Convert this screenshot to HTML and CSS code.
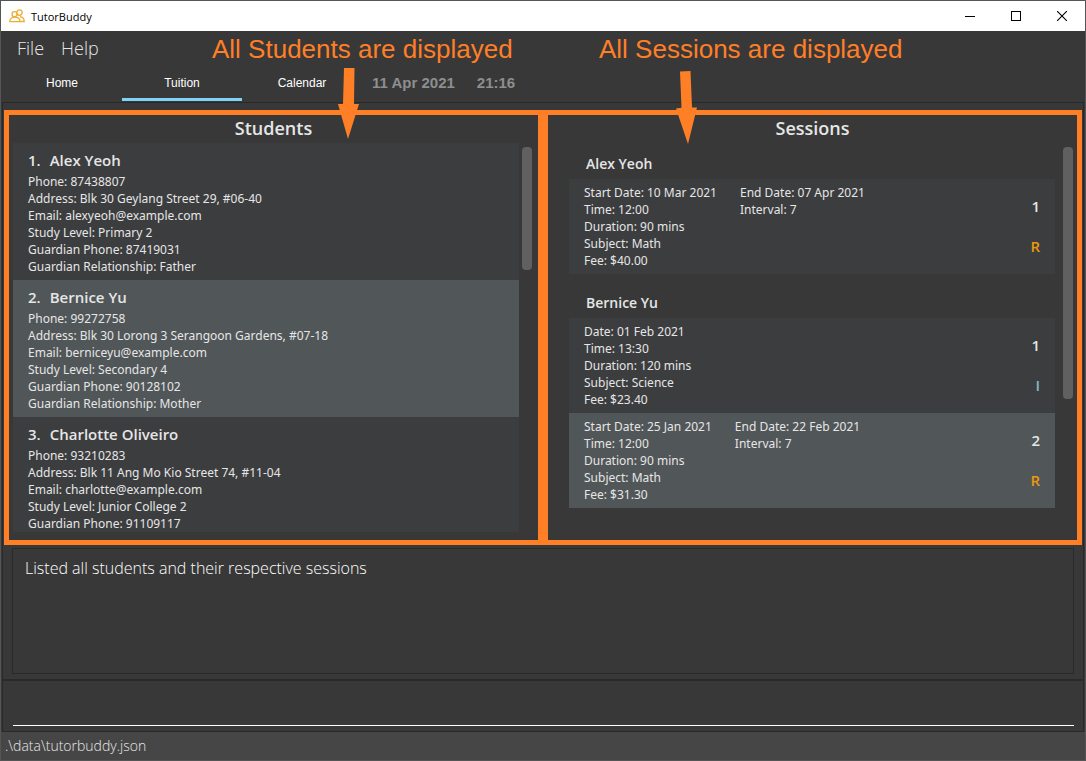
FILE: index.html
```html
<!DOCTYPE html>
<html lang="en">
<head>
<meta charset="utf-8">
<title>TutorBuddy</title>
<link rel="stylesheet" href="styles.css">
</head>
<body>
<div class="window">
  <header class="titlebar">
    <svg class="logo" width="16" height="14" viewBox="0 0 16 14" fill="none" stroke="#eeac32" stroke-width="1.3">
      <circle cx="10.5" cy="3.6" r="2.7"/>
      <path d="M11 7.600c2.600.3 4.200 1.900 4.200 4.900h-4"/>
      <circle cx="5.500" cy="5.200" r="2.500" fill="#fff"/>
      <path d="M.8 12.600c0-2.600 1.700-4.400 4.900-4.400s5.300 1.800 5.300 4.400z" fill="#fff"/>
    </svg>
    <span class="app-name">TutorBuddy</span>
    <button class="win-btn" aria-label="Minimize"><svg width="10" height="10" shape-rendering="crispEdges"><path d="M0 5.500h10" stroke="#000"/></svg></button>
    <button class="win-btn" aria-label="Maximize"><svg width="10" height="10" shape-rendering="crispEdges"><path d="M.5.5h9v9h-9z" fill="none" stroke="#000"/></svg></button>
    <button class="win-btn" aria-label="Close"><svg width="10" height="10"><path d="M0 0l10 10M10 0L0 10" stroke="#000" stroke-width="1.100"/></svg></button>
  </header>

  <nav class="menubar">
    <button class="menu">File</button>
    <button class="menu">Help</button>
  </nav>

  <nav class="tabs">
    <button class="tab">Home</button>
    <button class="tab active">Tuition</button>
    <button class="tab">Calendar</button>
    <span class="clock">11 Apr 2021</span>
    <span class="clock">21:16</span>
  </nav>

  <main class="panels">
    <section class="panel">
      <h2 class="panel-title">Students</h2>
      <div class="panel-body">
        <div class="students">
          <article class="student">
            <h3 class="name"><span>1.</span><span>Alex Yeoh</span></h3>
            <p>Phone: 87438807</p>
            <p>Address: Blk 30 Geylang Street 29, #06-40</p>
            <p>Email: alexyeoh@example.com</p>
            <p>Study Level: Primary 2</p>
            <p>Guardian Phone: 87419031</p>
            <p>Guardian Relationship: Father</p>
          </article>
          <article class="student alt">
            <h3 class="name"><span>2.</span><span>Bernice Yu</span></h3>
            <p>Phone: 99272758</p>
            <p>Address: Blk 30 Lorong 3 Serangoon Gardens, #07-18</p>
            <p>Email: berniceyu@example.com</p>
            <p>Study Level: Secondary 4</p>
            <p>Guardian Phone: 90128102</p>
            <p>Guardian Relationship: Mother</p>
          </article>
          <article class="student">
            <h3 class="name"><span>3.</span><span>Charlotte Oliveiro</span></h3>
            <p>Phone: 93210283</p>
            <p>Address: Blk 11 Ang Mo Kio Street 74, #11-04</p>
            <p>Email: charlotte@example.com</p>
            <p>Study Level: Junior College 2</p>
            <p>Guardian Phone: 91109117</p>
          </article>
        </div>
        <div class="scroll"><div class="thumb thumb-students"></div></div>
      </div>
    </section>

    <section class="panel">
      <h2 class="panel-title">Sessions</h2>
      <div class="panel-body panel-body-wide">
        <div class="sessions">
          <h3 class="group">Alex Yeoh</h3>
          <article class="session">
            <div>
              <p>Start Date: 10 Mar 2021</p>
              <p>Time: 12:00</p>
              <p>Duration: 90 mins</p>
              <p>Subject: Math</p>
              <p>Fee: $40.00</p>
            </div>
            <div>
              <p>End Date: 07 Apr 2021</p>
              <p>Interval: 7</p>
            </div>
            <div class="marks"><span>1</span><span class="recurring">R</span></div>
          </article>
          <h3 class="group">Bernice Yu</h3>
          <article class="session">
            <div>
              <p>Date: 01 Feb 2021</p>
              <p>Time: 13:30</p>
              <p>Duration: 120 mins</p>
              <p>Subject: Science</p>
              <p>Fee: $23.40</p>
            </div>
            <div class="marks"><span>1</span><span class="individual">I</span></div>
          </article>
          <article class="session alt">
            <div>
              <p>Start Date: 25 Jan 2021</p>
              <p>Time: 12:00</p>
              <p>Duration: 90 mins</p>
              <p>Subject: Math</p>
              <p>Fee: $31.30</p>
            </div>
            <div>
              <p>End Date: 22 Feb 2021</p>
              <p>Interval: 7</p>
            </div>
            <div class="marks"><span>2</span><span class="recurring">R</span></div>
          </article>
        </div>
        <div class="scroll"><div class="thumb thumb-sessions"></div></div>
      </div>
    </section>
  </main>

  <section class="result">
    <output class="result-box">Listed all students and their respective sessions</output>
  </section>

  <form class="command">
    <input class="command-input" type="text" aria-label="Command">
  </form>

  <footer class="status">.\data\tutorbuddy.json</footer>

  <div class="note note-students">All Students are displayed</div>
  <div class="note note-sessions">All Sessions are displayed</div>
  <svg class="arrow arrow-students" width="24" height="74" viewBox="0 0 24 74"><path d="M7 2h10.500l-.5 36h5L11 73 1 38h5z" fill="#ff7f27"/></svg>
  <svg class="arrow arrow-sessions" width="24" height="76" viewBox="0 0 24 76"><path d="M5 2.500L15.500 2l1.500 36.500h5L13 75 1 39.500l5.500-.7z" fill="#ff7f27"/></svg>
</div>
</body>
</html>
```

FILE: styles.css
```css
* { box-sizing: border-box; }

body {
  margin: 0;
  background: #383838;
  color: #e6e6e6;
  font: 12px/17px "Noto Sans", "Open Sans", sans-serif;
}

h2, h3, p { margin: 0; }
button { border: 0; padding: 0; background: none; color: inherit; font: inherit; }

.window {
  position: relative;
  display: flex;
  flex-direction: column;
  min-height: 100vh;
  border: 1px solid #555;
}

.titlebar {
  display: flex;
  align-items: center;
  height: 30px;
  padding-left: 8px;
  background: #fff;
  color: #000;
}
.app-name { flex: 1; margin-left: 6px; font-family: "Open Sans", sans-serif; font-size: 11px; }
.win-btn { display: grid; place-items: center; width: 46px; height: 30px; }

.menubar {
  display: flex;
  gap: 17px;
  height: 34px;
  padding: 0 16px;
  align-items: center;
  font-family: "Open Sans", sans-serif;
  font-size: 18px;
  font-weight: 300;
}

.tabs {
  display: flex;
  align-items: center;
  height: 37px;
  padding: 0 1px;
  font-family: "Liberation Sans", Arial, sans-serif;
}
.tab {
  width: 120px;
  height: 36px;
  border: solid transparent;
  border-width: 3px 0;
  color: #fff;
  align-self: flex-start;
}
.tab.active { border-bottom-color: #7fd3f7; }
.clock {
  height: 19px;
  margin-left: 10px;
  color: #8e8e8e;
  font-size: 15px;
  font-weight: bold;
}
.clock + .clock { margin-left: 22px; }

.panels {
  display: flex;
  flex: 1;
  margin: 0 1px;
  padding: 7px 1px 0;
  border: 1px solid #292929;
  border-bottom: 0;
}
.panel {
  display: flex;
  flex: 1;
  flex-direction: column;
  min-width: 0;
  border: 5px solid #ff7f27;
}
.panel-title {
  height: 28px;
  font-family: "Open Sans", sans-serif;
  font-size: 18px;
  font-weight: 600;
  line-height: 26px;
  text-align: center;
}
.panel-body { display: flex; flex: 1; gap: 3px; padding: 0 6px 8px 4px; }
.panel-body-wide { padding-right: 4px; }
.scroll { width: 10px; padding-top: 4px; }
.thumb { border-radius: 4px; background: #606060; }
.thumb-students { height: 123px; }
.thumb-sessions { height: 252px; }

.students { flex: 1; background: #3c3d3f; }
.student { height: 137px; padding: 7px 15px 0; }
.student:last-child { height: auto; }
.alt { background: #515658; }
.name {
  display: flex;
  gap: 9px;
  height: 23px;
  font-family: "Open Sans", sans-serif;
  font-size: 15px;
  font-weight: 600;
  line-height: 20px;
}

.sessions { flex: 1; padding: 0 5px 0 17px; }
.group {
  height: 44px;
  padding: 19px 17px 0;
  font-family: "Open Sans", sans-serif;
  font-size: 14px;
  font-weight: 600;
  line-height: 20px;
}
.group:first-child { height: 36px; padding-top: 11px; }
.session {
  display: flex;
  gap: 23px;
  padding: 5px 15px;
  background: #3c3d3f;
}
.session.alt { background: #515658; }
.marks {
  display: flex;
  flex-direction: column;
  gap: 20px;
  margin-left: auto;
  padding-top: 12px;
  font-family: "Open Sans", sans-serif;
  font-size: 15px;
  font-weight: 600;
  line-height: 20px;
  text-align: right;
}
.recurring { color: #e8990c; }
.individual { color: #7fb8cc; }

.result { margin: 0 1px; padding: 3px 9px 5px; border: solid #292929; border-width: 0 1px 1px; }
.result-box {
  display: block;
  height: 126px;
  padding: 8px 12px;
  border: 1px solid #292929;
  color: #fff;
  font-family: "Open Sans", sans-serif;
  font-size: 16px;
  font-weight: 300;
  line-height: 22px;
}

.command {
  height: 52px;
  margin: 0 1px;
  padding: 4px 9px 0 10px;
  border: 1px solid #292929;
}
.command-input {
  display: block;
  width: 100%;
  height: 41px;
  border: 0;
  border-bottom: 1px solid #fff;
  outline: 0;
  background: transparent;
  color: #fff;
  font: inherit;
}

.status {
  height: 28px;
  padding: 0 4px;
  background: #464646;
  font-family: "Open Sans", sans-serif;
  font-size: 14px;
  font-weight: 300;
  line-height: 28px;
}

.note {
  position: absolute;
  top: 30px;
  color: #ff7f27;
  font: 26px/36px "Liberation Sans Narrow", "Arial Narrow", "Liberation Sans", sans-serif;
  white-space: nowrap;
}
.note-students { left: 211px; }
.note-sessions { left: 598px; }
.arrow { position: absolute; }
.arrow-students { left: 336px; top: 65px; }
.arrow-sessions { left: 674px; top: 68px; }
```
